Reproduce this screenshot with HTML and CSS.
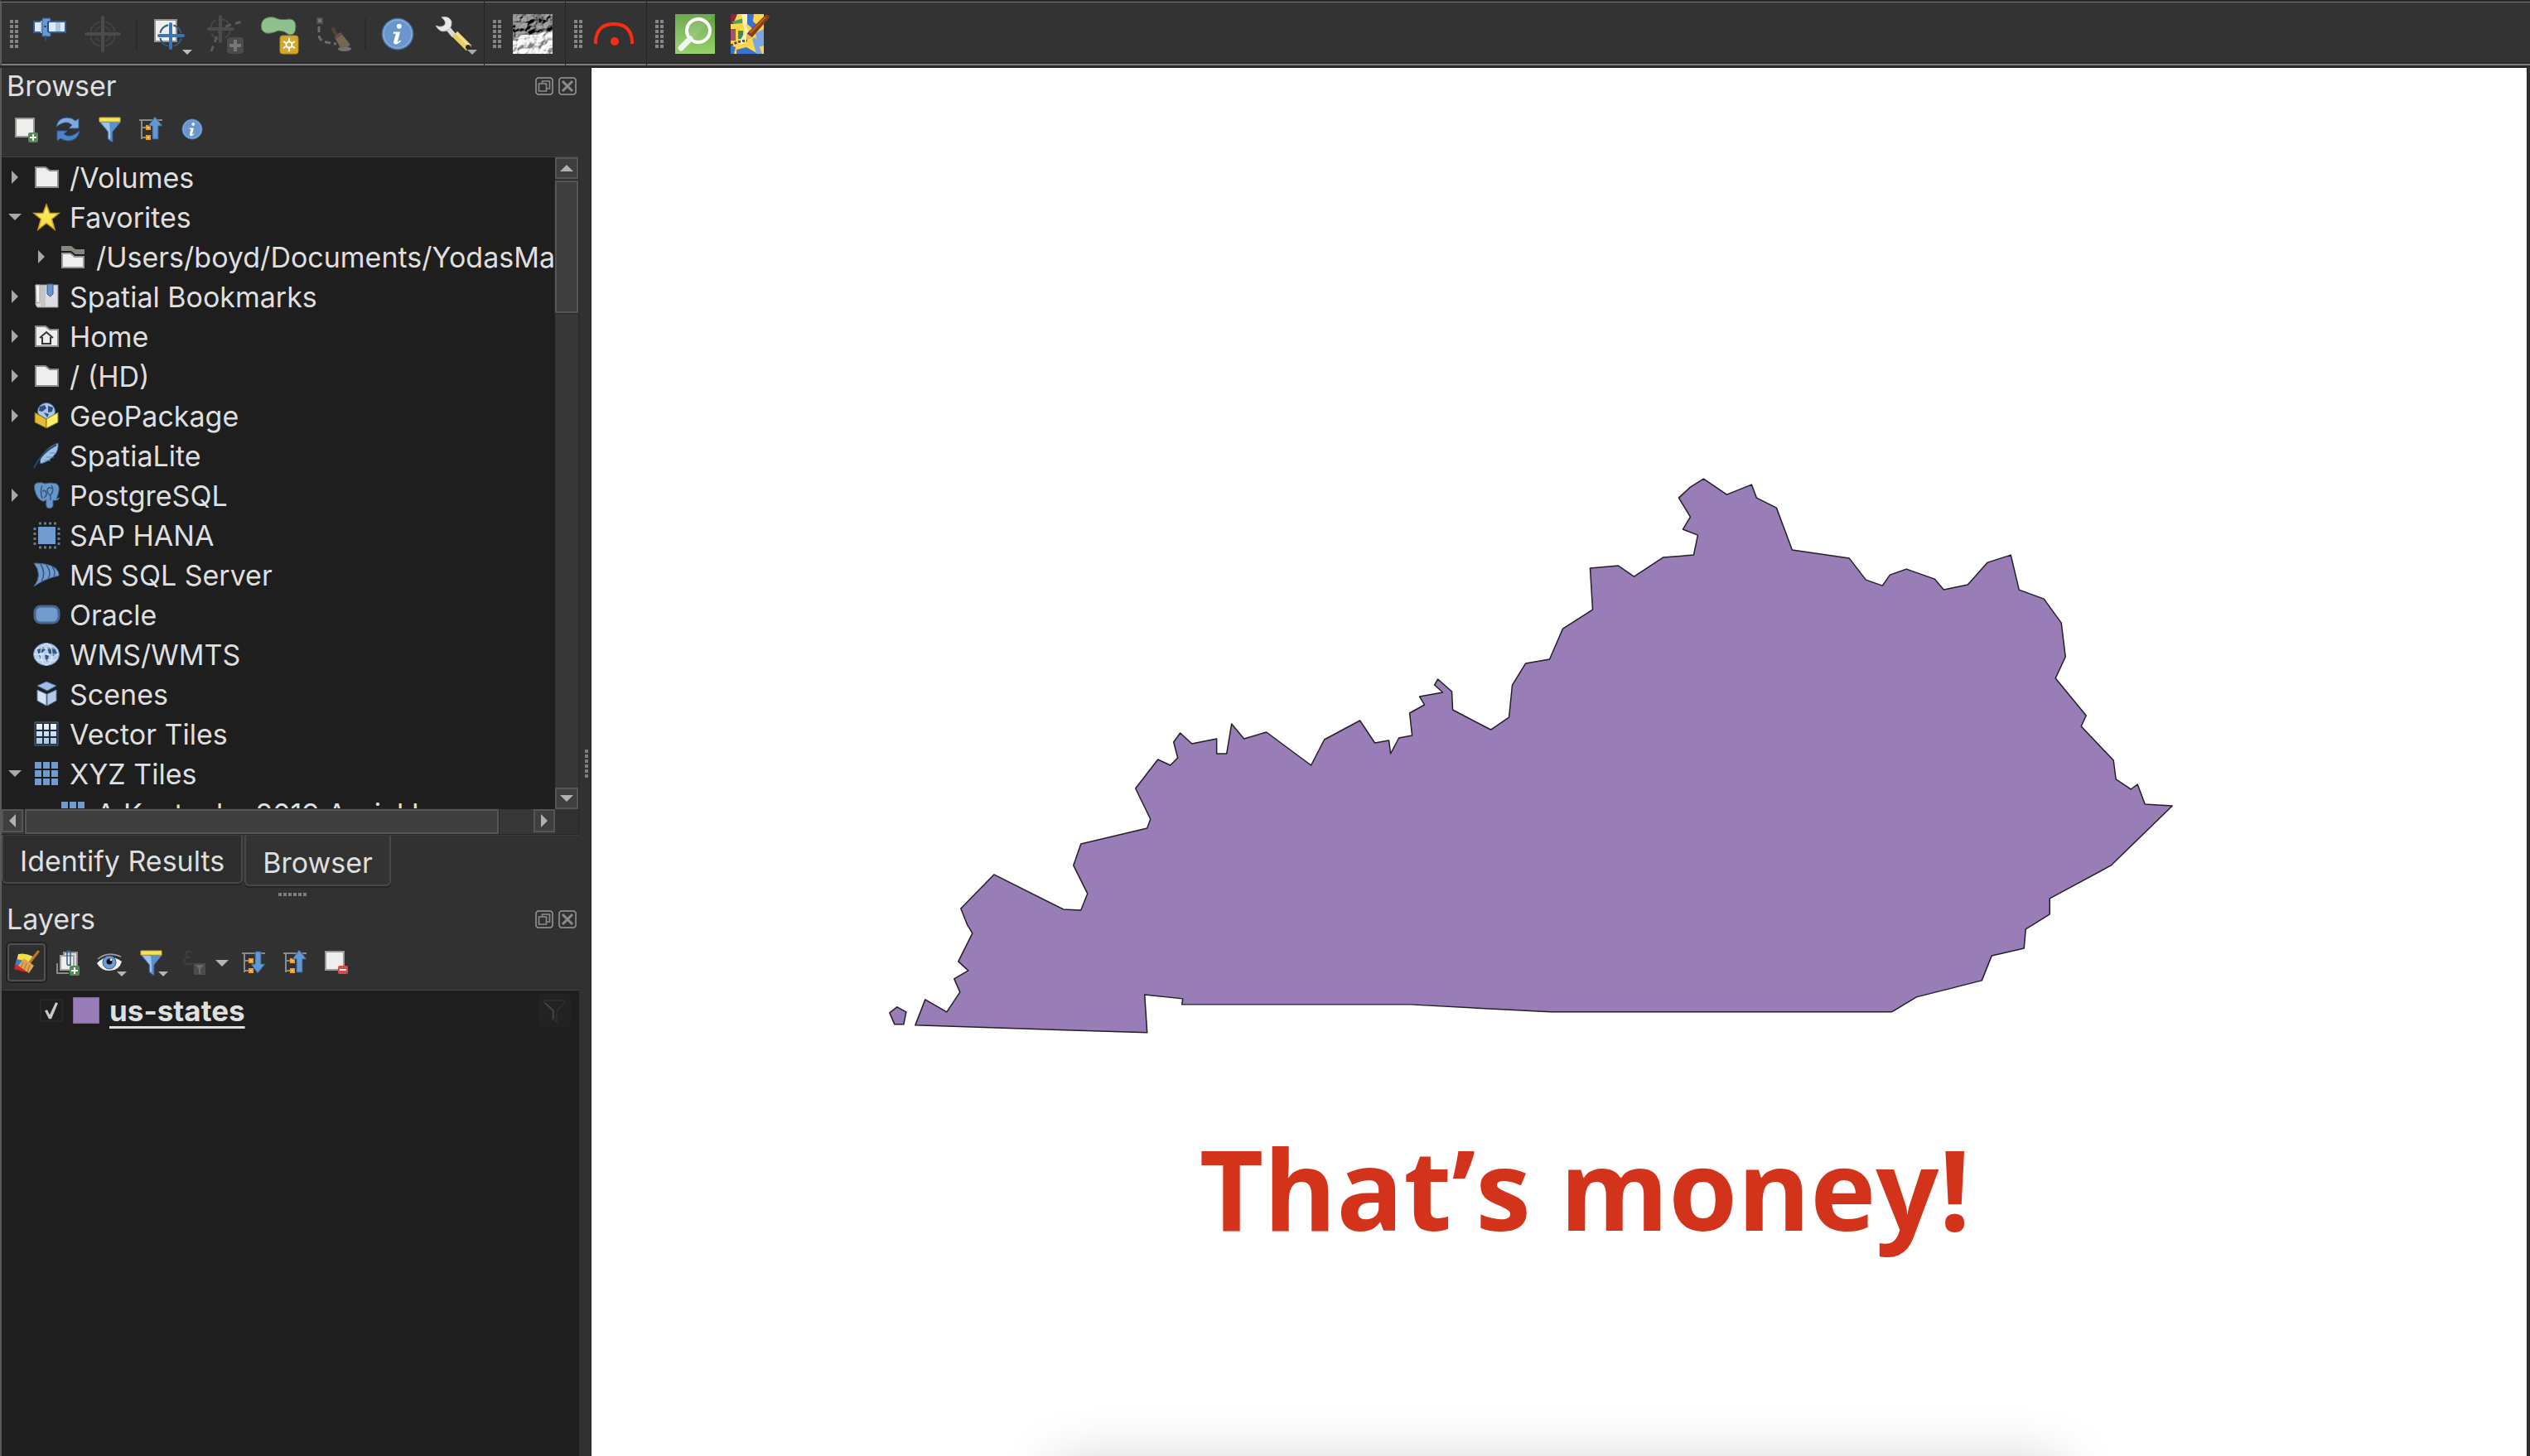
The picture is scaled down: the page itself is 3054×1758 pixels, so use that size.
FILE: index.html
```html
<!DOCTYPE html>
<html lang="en">
<head>
<meta charset="utf-8">
<title>Map</title>
<link rel="stylesheet" href="styles.css">
</head>
<body>
<svg class="defs" aria-hidden="true">
  <defs>
    <linearGradient id="gold" x1="0" y1="0" x2="0" y2="1"><stop offset="0" stop-color="#fff46b"/><stop offset="1" stop-color="#f0d840"/></linearGradient>
    <linearGradient id="ice" x1="0" y1="0" x2="0" y2="1"><stop offset="0" stop-color="#f4f6fa"/><stop offset="1" stop-color="#a4c3e6"/></linearGradient>
    <linearGradient id="leaf" x1="0" y1="0" x2="0" y2="1"><stop offset="0" stop-color="#5e9f3a"/><stop offset="1" stop-color="#97d36b"/></linearGradient>
    <filter id="relief" x="0" y="0" width="1" height="1">
      <feTurbulence type="fractalNoise" baseFrequency="0.09 0.1" numOctaves="3" seed="5"/>
      <feDiffuseLighting lighting-color="#fff" surfaceScale="9" diffuseConstant="1"><feDistantLight azimuth="225" elevation="42"/></feDiffuseLighting>
    </filter>
  </defs>
  <symbol id="folder" viewBox="0 0 32 32"><path d="M3 4h12l5 4h10v20H3z" fill="#eee" stroke="#8b8b88" stroke-width="2"/></symbol>
  <symbol id="folder-open" viewBox="0 0 32 32"><path d="M2 3h12l5 4h11v6H19l-5-4H2z" fill="#85877f"/><path d="M3 12h10l5 4h11v13H3z" fill="#eee" stroke="#999" stroke-width="2"/></symbol>
  <symbol id="info" viewBox="0 0 32 32"><circle cx="16" cy="16" r="15" fill="#6a96cb" stroke="#44709f" stroke-width="1"/><circle cx="16" cy="16" r="13.5" fill="none" stroke="#8db2dc" stroke-width="1"/><circle cx="17.5" cy="8.5" r="2.3" fill="#fff"/><path d="M12 14h6.500l-2.600 9.500q.8.500 2.500-1.500l.8.800q-3 3.800-5.700 3.200-2-.6-1.200-3.300l2-7h-2.500z" fill="#fff"/></symbol>
  <symbol id="filter" viewBox="0 0 32 32"><path d="M4 7h26L20 19v13l-6-4v-9z" fill="#5c8fcb" stroke="#2f5680"/><path d="M6 8h10l1 11v9l-2-1v-8z" fill="#9fc2e8"/><path d="M4 2h25v5H4z" fill="#f6e35b" stroke="#c9b545"/></symbol>
  <symbol id="tree-up" viewBox="0 0 32 32"><path d="M2 5h28M5 5v23M5 14h6M5 26h6" fill="none" stroke="#8a8a86" stroke-width="2"/><path d="M10 11h6v6h-6zM10 23h6v6h-6z" fill="#f39b22"/><path d="M12 13h2v2h-2zM12 25h2v2h-2z" fill="#ffd27a"/><path d="M21 1l9 11h-5v16h-7V12h-5z" fill="#6496cf" stroke="#2f5c8f"/></symbol>
  <symbol id="tree-down" viewBox="0 0 32 32"><path d="M2 5h28M5 5v23M5 14h6M5 26h6" fill="none" stroke="#8a8a86" stroke-width="2"/><path d="M10 11h6v6h-6zM10 23h6v6h-6z" fill="#f39b22"/><path d="M12 13h2v2h-2zM12 25h2v2h-2z" fill="#ffd27a"/><path d="M21 29l9-11h-5V3h-7v15h-5z" fill="#6496cf" stroke="#2f5c8f"/></symbol>
  <symbol id="float" viewBox="0 0 22 22"><path d="M3 1h16l2 2v16l-2 2H3l-2-2V3z" fill="none" stroke="#999" stroke-width="1.500"/><path d="M8.500 8V5h9v9h-4M4.500 8h9v9h-9z" fill="none" stroke="#8c8c8c" stroke-width="1.600"/></symbol>
  <symbol id="close" viewBox="0 0 22 22"><path d="M3 1h16l2 2v16l-2 2H3l-2-2V3z" fill="none" stroke="#999" stroke-width="1.500"/><path d="M5 5l12 12M17 5L5 17" stroke="#8c8c8c" stroke-width="3"/></symbol>
</svg>

<header class="toolbar" role="toolbar" aria-label="Tools">
  <div class="group">
    <span class="grip"></span>
    <button class="tool" aria-label="Satellite"><svg viewBox="0 0 48 48"><path d="M5 9h38v13H5z" fill="#dfe9f5" stroke="#2f5f94" stroke-width="2"/><path d="M13 8h3v15h-3zM31 10h6v11h-6z" fill="#a6c6ec"/><path d="M15 5h10v4h-3v13h3v5H15z" fill="#6b9ad2" stroke="#2d5b90"/><path d="M22 9v13M17 15h3M19 26v6" stroke="#24507f" stroke-width="2"/></svg></button>
    <button class="tool" aria-label="Recenter" disabled><svg viewBox="0 0 48 48" fill="none"><circle cx="22" cy="24" r="15" stroke="#444" stroke-width="2" stroke-dasharray="17 6.560" stroke-dashoffset="-3"/><circle cx="22" cy="24" r="9" stroke="#3f3f3f" stroke-width="2" stroke-dasharray="9 5.140" stroke-dashoffset="-2"/><path d="M22 4v40M2 24h40" stroke="#4a4b4f" stroke-width="4" stroke-linecap="round"/></svg></button>
    <span class="sep"></span>
    <button class="tool" aria-label="Position"><svg viewBox="0 0 48 48" fill="none"><path d="M7 7h26v26H7z" fill="#eeeeec" stroke="#93938f" stroke-width="2"/><circle cx="26" cy="26" r="13" stroke="#33597f" stroke-width="2" stroke-dasharray="14 6.420" stroke-dashoffset="-3"/><path d="M26 12v29M12 26h29" stroke="#3f73ae" stroke-width="4" stroke-linecap="round"/><path d="M40 43h12l-6 6z" fill="#bbb"/></svg></button>
    <button class="tool" aria-label="Add vertex" disabled><svg viewBox="0 0 48 48" fill="none"><circle cx="20" cy="18" r="12" stroke="#464646" stroke-width="2" stroke-dasharray="13 5.850"/><path d="M9 45l8-21 6-8 23-7" stroke="#5a5a5a" stroke-width="3" stroke-dasharray="7 5"/><path d="M20 3v30M6 18h29" stroke="#4a4b4f" stroke-width="4" stroke-linecap="round"/><rect x="28" y="28" width="20" height="20" rx="4" fill="#4a4c4a"/><path d="M38 31v14M31 38h14" stroke="#777" stroke-width="4"/></svg></button>
    <button class="tool" aria-label="Add polygon"><svg viewBox="0 0 48 48"><path d="M4 10Q8 2 19 4q7 4 18 2 8 0 8 9 0 11-8 10-6-5-13-5-9 4-15 3Q1 20 4 10z" fill="#8fc18e" stroke="#4e7a4f"/><rect x="26" y="26" width="22" height="22" rx="3" fill="#d2a92c" stroke="#b08a1e"/><path d="M37 29v16M30 33l14 8M44 33l-14 8" stroke="#fff" stroke-width="2"/><circle cx="37" cy="37" r="3.500" fill="#d2a92c" stroke="#fff" stroke-width="2"/></svg></button>
    <button class="tool" aria-label="Reset track" disabled><svg viewBox="0 0 48 48"><path d="M5 5h6v6H5z" fill="#777" stroke="#4f4f4f" stroke-width="2"/><path d="M7 15v10q0 7 9 9l12 2" fill="none" stroke="#6d6d6d" stroke-width="3" stroke-dasharray="7 4"/><ellipse cx="38" cy="42" rx="8" ry="3" fill="#737373"/><path d="M24 18l8 14" stroke="#5b4234" stroke-width="4" stroke-linecap="round"/><path d="M26 28l7-6 12 15q-4 4-12 4z" fill="#746852"/><path d="M27 29l7-5" stroke="#5a4a45" stroke-width="2"/></svg></button>
    <span class="sep"></span>
    <button class="tool" aria-label="Identify"><svg viewBox="0 0 48 48"><use href="#info" x="4" y="4" width="40" height="40"/></svg></button>
    <button class="tool" aria-label="Options"><svg viewBox="0 0 48 48"><path d="M16 14l10 12" stroke="#d8dad7" stroke-width="6"/><path d="M11 4q9-2 12 5 1 6-4 10-7 4-12-1l-3-4q7 3 11-1 2-5-4-9z" fill="#e9e9e7" stroke="#c2c2be"/><path d="M27 24l17 17" stroke="#e9cf68" stroke-width="9"/><path d="M29 23l17 17" stroke="#f6e7a0" stroke-width="2"/><circle cx="43" cy="40" r="3" fill="#2a2a2a"/><path d="M42 43h12l-6 6z" fill="#aaa"/></svg></button>
  </div>
  <div class="group">
    <span class="grip"></span>
    <button class="tool" aria-label="Hillshade"><svg viewBox="0 0 48 48"><rect width="48" height="48" filter="url(#relief)"/><path d="M0 27l14-3 16 1 8-5 10 1v27H0z" fill="#fff" opacity=".5"/><path d="M0 0h48v20l-10 1-8 4H14L0 27z" fill="#000" opacity=".35"/></svg></button>
  </div>
  <div class="group">
    <span class="grip"></span>
    <button class="tool" aria-label="Snapping arc"><svg viewBox="0 0 48 48"><path d="M2 36v-4Q4 12 24 12t22 20v4" fill="none" stroke="#fb2c16" stroke-width="4"/><circle cx="25" cy="33" r="5" fill="#fb2c16"/></svg></button>
  </div>
  <div class="group">
    <span class="grip"></span>
    <button class="tool" aria-label="Search"><svg viewBox="0 0 48 48"><path d="M0 0h48v48H0z" fill="url(#leaf)"/><path d="M0 0h48L20 32l-20 8z" fill="#fff" opacity=".1"/><circle cx="28" cy="20" r="14" fill="#fff" fill-opacity=".12" stroke="#fff" stroke-width="4"/><path d="M18 30L7 41" stroke="#f1f7ee" stroke-width="7" stroke-linecap="round"/></svg></button>
    <button class="tool" aria-label="Edit map"><svg viewBox="0 0 48 48"><path d="M1 0h40v48H1z" fill="#ffd54a"/><path d="M1 0h8L4 12H1z" fill="#8d2440"/><path d="M1 18h6v14H1z" fill="#a3506e"/><path d="M3 9l13-4-1 6-11 1z" fill="#41a94d"/><path d="M10 20h6v10h-6z" fill="#3b8a55"/><path d="M14 0h8l-2 14 4 10-8 12h-6l8-14z" fill="#fff0b8"/><path d="M21 0h8l-1 9 6 5-5 5-8-7zM8 43l12-3 14 8H8zM1 38l6 2-2 8H1z" fill="#3a72cf"/><path d="M31 23l10-5v20l-7 2zM27 30l4-2 8 20h-7z" fill="#7ba6e5"/><path d="M1 38q10-6 20-6" fill="none" stroke="#4f4f44" stroke-width="3" stroke-dasharray="3 2"/><path d="M21 23L43 1q4-1 5 3L27 28l-7 3z" fill="#8a3f12"/><path d="M24 23L43 4" stroke="#b5632b" stroke-width="2"/><path d="M21 24l6 4-7 3z" fill="#e8b87c"/></svg></button>
  </div>
</header>

<main class="workspace">
  <aside class="dock">
    <div class="titlebar">
      <h2 class="title">Browser</h2>
      <button class="mini" aria-label="Float Browser"><svg><use href="#float"/></svg></button>
      <button class="mini" aria-label="Close Browser"><svg><use href="#close"/></svg></button>
    </div>
    <div class="panelbar">
      <button class="small" aria-label="Add layer"><svg viewBox="0 0 32 32"><path d="M3 3h22v22H3z" fill="#eeeeec" stroke="#999994" stroke-width="2"/><rect x="18" y="20" width="12" height="12" rx="2" fill="#548a55"/><path d="M24 22v8M20 26h8" stroke="#fff" stroke-width="2"/></svg></button>
      <button class="small" aria-label="Refresh"><svg viewBox="0 0 32 32"><path d="M2 13Q4 2 15 2q6 0 10 4l4-3v12H17l4-4q-4-4-9-3-5 1-10 5z" fill="#7faade" stroke="#2f5f9e"/><path d="M30 18q-2 11-13 12-6 0-10-3l-4 3V18h12l-4 4q4 3 9 2 6-2 10-6z" fill="#4e84c6" stroke="#2f5f9e"/></svg></button>
      <button class="small" aria-label="Filter browser"><svg><use href="#filter"/></svg></button>
      <button class="small" aria-label="Collapse all"><svg><use href="#tree-up"/></svg></button>
      <button class="small" aria-label="Properties"><svg viewBox="0 0 32 32"><use href="#info" x="3" y="3" width="26" height="26"/></svg></button>
    </div>
    <div class="browser">
      <ul class="tree">
        <li class="row"><button class="twist" aria-label="Expand"></button><svg><use href="#folder"/></svg><span>/Volumes</span></li>
        <li class="row"><button class="twist open" aria-label="Collapse"></button><svg viewBox="0 0 32 32"><path d="M16 1l4 10.500h11l-8.500 7L26 31l-10-7.500L6 31l3.500-12.500L1 11.500h11z" fill="url(#gold)" stroke="#c99a1c" stroke-width="1.500"/></svg><span>Favorites</span></li>
        <li class="row child"><button class="twist" aria-label="Expand"></button><svg><use href="#folder-open"/></svg><span>/Users/boyd/Documents/YodasMa</span></li>
        <li class="row"><button class="twist" aria-label="Expand"></button><svg viewBox="0 0 32 32"><path d="M3 2h27v27H5l-2-3z" fill="#dcdde0" stroke="#8d9098"/><path d="M3 2h5v21l-4 1z" fill="#f5f5f5" stroke="#9a9a9a"/><path d="M9 3h6v25H9z" fill="#c3c5c9"/><path d="M17 1h7v12l-3.500 3-3.500-3z" fill="#6794c9" stroke="#355f92"/></svg><span>Spatial Bookmarks</span></li>
        <li class="row"><button class="twist" aria-label="Expand"></button><svg viewBox="0 0 32 32"><use href="#folder"/><path d="M8 18l8-7 8 7M11 17v8h10v-8" fill="none" stroke="#333" stroke-width="2"/></svg><span>Home</span></li>
        <li class="row"><button class="twist" aria-label="Expand"></button><svg><use href="#folder"/></svg><span>/ (HD)</span></li>
        <li class="row"><button class="twist" aria-label="Expand"></button><svg viewBox="0 0 32 32"><circle cx="16" cy="11" r="10.500" fill="#a9c6e8" stroke="#4475a8"/><path d="M8 5l6-2 2 4-5 4-4-1zM18 4l6 2-1 5-5 1zM13 12l6 2-2 4z" fill="#2a4f7c"/><path d="M2 12l14 8v11L2 24z" fill="#e3bc35" stroke="#6e5a10"/><path d="M30 12l-14 8v11l14-7z" fill="#fff06a" stroke="#8a7a20"/></svg><span>GeoPackage</span></li>
        <li class="row"><span class="twist none"></span><svg viewBox="0 0 32 32"><path d="M30 1q1 9-4 14-6 8-17 11Q7 20 13 13 20 4 30 1z" fill="#9fc0e4" stroke="#3c6591"/><path d="M28 3Q10 12 1 31" fill="none" stroke="#27496e" stroke-width="2"/><path d="M13 22h8M16 18h9M20 13h8" stroke="#5f8bbd"/></svg><span>SpatiaLite</span></li>
        <li class="row"><button class="twist" aria-label="Expand"></button><svg viewBox="0 0 32 32"><path d="M5 1q6-1 9 1 7-2 14 0 4 2 3 9-1 6-3 9l4-1q-2 4-8 3v7q-2 4-7 2-2-2-1-10-2 3-5 2-6-2-9-13Q0 2 5 1z" fill="#6996c9" stroke="#3b5f89"/><path d="M11 4q-3 7 0 16M22 4q4 6-1 12v6M13 19q5-3 2-8-3-2-3 1M22 8q-4-3-5 2 0 3 3 6" fill="none" stroke="#34557c" stroke-width="1.500"/></svg><span>PostgreSQL</span></li>
        <li class="row"><span class="twist none"></span><svg viewBox="0 0 32 32"><path d="M6 6h21v21H6z" fill="#6f9bce"/><path d="M7 2h21M7 31h21" stroke="#637a96" stroke-width="3" stroke-dasharray="3"/><path d="M2 7v21M31 7v21" stroke="#637a96" stroke-width="3" stroke-dasharray="3"/></svg><span>SAP HANA</span></li>
        <li class="row"><span class="twist none"></span><svg viewBox="0 0 32 32"><path d="M1 2q18 0 26 6 5 5 4 9-18 4-30 13 11-14 0-28z" fill="#6f9bce" stroke="#45698f"/><path d="M9 3q7 12 1 21M16 4q7 10 2 17M23 6q5 7 2 12" fill="none" stroke="#35577d" stroke-width="1.500"/></svg><span>MS SQL Server</span></li>
        <li class="row"><span class="twist none"></span><svg viewBox="0 0 32 32"><rect x="2" y="6" width="29" height="20" rx="7" fill="#6f9bce" stroke="#4a658a" stroke-width="3"/></svg><span>Oracle</span></li>
        <li class="row"><span class="twist none"></span><svg viewBox="0 0 32 32"><ellipse cx="16" cy="16" rx="15.500" ry="13.500" fill="#b7cfec" stroke="#6c93c2"/><path d="M5 10l7-3 3 3-4 4-5 1zM17 8l9 0 3 7-5 3-5-3zM14 16l5 2-2 7-2-2zM7 17l3 1-1 4z" fill="#34577f"/><path d="M1 16h30M4 9h24M4 23h24" stroke="#eaf2fb" opacity=".8"/><ellipse cx="16" cy="16" rx="7" ry="13" fill="none" stroke="#eaf2fb"/></svg><span>WMS/WMTS</span></li>
        <li class="row"><span class="twist none"></span><svg viewBox="0 0 32 32"><path d="M16 1l12 5-11 6L5 6z" fill="#9dbde2" stroke="#44709f"/><path d="M5 11l11 5v14L5 24z" fill="#d3e1f2" stroke="#5d7fa8"/><path d="M28 11l-11 5v14l11-6z" fill="#b3cbe8" stroke="#5d7fa8"/></svg><span>Scenes</span></li>
        <li class="row"><span class="twist none"></span><svg viewBox="0 0 32 32"><path d="M2 2h28v28H2z" fill="#1d2b3d" stroke="#5f6f84"/><path d="M4 4h7v7H4zM13 4h6v7h-6zM21 4h7v7h-7zM4 13h7v6H4zM13 13h6v6h-6zM21 13h7v6h-7zM4 21h7v7H4zM13 21h6v7h-6zM21 21h7v7h-7z" fill="url(#ice)"/></svg><span>Vector Tiles</span></li>
        <li class="row"><button class="twist open" aria-label="Collapse"></button><svg viewBox="0 0 32 32"><path d="M2 2h8v8H2zM12 2h8v8h-8zM22 2h8v8h-8zM2 12h8v8H2zM12 12h8v8h-8zM22 12h8v8h-8zM2 22h8v8H2zM12 22h8v8h-8zM22 22h8v8h-8z" fill="#6f9bce"/></svg><span>XYZ Tiles</span></li>
        <li class="row child"><span class="twist none"></span><svg viewBox="0 0 32 32"><path d="M2 2h8v8H2zM12 2h8v8h-8zM22 2h8v8h-8zM2 12h8v8H2zM12 12h8v8h-8zM22 12h8v8h-8z" fill="#6f9bce"/></svg><span>A Kentucky 2019 Aerial Image</span></li>
      </ul>
      <div class="vscroll">
        <button class="arrow up" aria-label="Scroll up"></button>
        <div class="vthumb"></div>
        <button class="arrow down" aria-label="Scroll down"></button>
      </div>
      <div class="hscroll">
        <button class="arrow left" aria-label="Scroll left"></button>
        <div class="hthumb"></div>
        <button class="arrow right" aria-label="Scroll right"></button>
      </div>
    </div>
    <nav class="tabs">
      <button class="tab">Identify Results</button>
      <button class="tab active">Browser</button>
    </nav>
    <div class="splitter"><span class="dots"></span></div>
    <div class="titlebar">
      <h2 class="title">Layers</h2>
      <button class="mini" aria-label="Float Layers"><svg><use href="#float"/></svg></button>
      <button class="mini" aria-label="Close Layers"><svg><use href="#close"/></svg></button>
    </div>
    <div class="panelbar">
      <button class="small pressed" aria-label="Layer styling"><svg viewBox="0 0 32 32"><path d="M6 6q9-2 18 3l-6 14-15-4z" fill="#f1df4d"/><path d="M4 12l14 3-4 8-12-3z" fill="#4a7db8"/><path d="M2 19l14 2 3 7q-9-1-18-4z" fill="#d8242b"/><path d="M30 3L20 16" stroke="#b67b28" stroke-width="3" stroke-linecap="round"/><path d="M13 11l12 9-6 9-13-9z" fill="#dca556"/><path d="M12 16l-3 7M16 17l-3 8M20 19l-3 9" stroke="#a8702b"/></svg></button>
      <button class="small" aria-label="Add group"><svg viewBox="0 0 32 32" fill="none"><path d="M3 17v12h14" stroke="#8c8c88" stroke-width="2"/><path d="M11 4h16v17H11z" fill="#ddd" stroke="#8f8f8b" stroke-width="2"/><path d="M7 8h16v17H7z" fill="#eee" stroke="#a5a5a0" stroke-width="2"/><path d="M19 20V3q-2-3-4 0v15q2 3 4 0" stroke="#315f93" stroke-width="1.500"/><rect x="18" y="20" width="12" height="12" rx="2" fill="#548a55"/><path d="M24 22v8M20 26h8" stroke="#fff" stroke-width="2"/></svg></button>
      <button class="small" aria-label="Map themes"><svg viewBox="0 0 32 32"><path d="M1 17Q14 3 31 15q-3 11-15 11Q6 26 1 17z" fill="#f0f0f0"/><path d="M2 12Q14 2 30 9" fill="none" stroke="#a0a09c" stroke-width="1.500"/><circle cx="16" cy="16" r="8" fill="#6d9bd2" stroke="#365f8f"/><circle cx="16" cy="15" r="3.500" fill="#111"/><circle cx="18" cy="13" r="1.300" fill="#fff"/><path d="M25 27h12l-6 6z" fill="#b5b5b5"/></svg></button>
      <button class="small" aria-label="Filter legend"><svg viewBox="0 0 32 32"><use href="#filter"/><path d="M25 27h12l-6 6z" fill="#b5b5b5"/></svg></button>
      <button class="small wide" aria-label="Filter by expression" disabled><svg viewBox="0 0 32 32"><path d="M17 4Q9 0 8 6q0 4 6 4-8 0-8 5 2 6 11 2" fill="none" stroke="#3f3f3f" stroke-width="2"/><path d="M18 17h14v14H18z" fill="#4b4b4b"/><path d="M20 19h10l-4 5v7l-2-2v-5z" fill="#6a6a6a"/></svg><svg viewBox="0 0 16 32"><path d="M0 13h16l-8 8z" fill="#b5b5b5"/></svg></button>
      <button class="small" aria-label="Expand all"><svg><use href="#tree-down"/></svg></button>
      <button class="small" aria-label="Collapse all layers"><svg><use href="#tree-up"/></svg></button>
      <button class="small" aria-label="Remove layer"><svg viewBox="0 0 32 32"><path d="M3 3h22v22H3z" fill="#eeeeec" stroke="#999994" stroke-width="2"/><rect x="18" y="20" width="12" height="10" rx="2" fill="#de4a4a"/><path d="M20 25h8" stroke="#fff" stroke-width="2"/></svg></button>
    </div>
    <ul class="layers">
      <li class="layer">
        <input class="check" type="checkbox" id="layer-states" checked>
        <span class="swatch"></span>
        <label class="name" for="layer-states">us-states</label>
        <button class="badge" aria-label="Layer filter"><svg viewBox="0 0 32 32"><path d="M4 4h24v3L19 17v13l-5-4v-9L4 7z" fill="none" stroke="#303030" stroke-width="1.500"/><path d="M5 7l10 9v10" fill="none" stroke="#4a4a4a" stroke-width="1.500"/></svg></button>
      </li>
    </ul>
  </aside>
  <div class="gutter"><span class="dots upright"></span></div>
  <section class="canvas">
    <svg class="map" viewBox="714 82 2337 1676" role="img" aria-label="Kentucky">
      <g class="state">
        <path d="M1074 1223L1083 1216L1094 1222L1091 1237L1080 1237Z"/>
        <path d="M1105 1238L1117 1207L1143 1222L1159 1198L1152 1182L1169 1172L1157 1161L1174 1127L1168 1117L1160 1097L1200 1056L1284 1098L1305 1099L1313 1079L1296 1045L1305 1019L1385 1000L1389 989L1371 952L1398 917L1413 924L1422 915L1417 896L1425 885L1439 898L1469 892L1469 910L1481 910L1487 874L1502 892L1529 884L1583 924L1599 893L1642 870L1660 897L1677 894L1679 910L1689 891L1705 888L1702 861L1720 851L1714 841L1742 836L1732 827L1736 820L1753 835L1754 857L1800 881L1822 866L1826 827L1842 801L1871 796L1887 759L1923 736L1920 686L1954 683L1973 696L2008 673L2045 670L2050 646L2032 639L2041 624L2027 601L2041 588L2057 578L2085 597L2115 585L2121 601L2145 613L2164 664L2233 674L2253 700L2273 707L2282 694L2302 687L2336 699L2347 712L2376 706L2400 679L2428 670L2438 712L2468 723L2489 752L2494 793L2482 819L2519 864L2513 877L2552 918L2555 941L2573 953L2581 947L2590 971L2623 973L2549 1045L2475 1085L2475 1104L2446 1122L2444 1145L2405 1154L2393 1184L2314 1204L2284 1222L1872 1222L1703 1213L1427 1213L1428 1206L1382 1201L1385 1247Z"/>
      </g>
      <text class="caption" x="1448" y="1486">That’s money!</text>
    </svg>
    <div class="shade"></div>
  </section>
</main>
</body>
</html>
```

FILE: styles.css
```css
* { box-sizing: border-box; }

body {
  margin: 0;
  height: 100vh;
  display: flex;
  flex-direction: column;
  overflow: hidden;
  background: #313131;
  color: #dfdfdf;
  font: 34px/44px Inter, "Liberation Sans", sans-serif;
}

button {
  padding: 0;
  border: 0;
  background: none;
  color: inherit;
  font: inherit;
}

ul { margin: 0; padding: 0; list-style: none; }
svg { display: block; overflow: visible; }
.defs { position: absolute; width: 0; height: 0; }

/* Top toolbar */
.toolbar {
  flex: none;
  display: flex;
  height: 79px;
  border-top: 2px solid #272727;
  border-left: 2px solid #5a5a5a;
  background: #333;
  box-shadow: inset 0 1px #7a7a7a, inset 0 -2px #7d7d7d, inset 0 -4px #282828;
}

.group {
  display: flex;
  align-items: center;
  gap: 18px;
  padding: 0 14px 0 10px;
}
.group + .group { padding-right: 15px; border-left: 1px solid #262626; }

.grip {
  width: 10px;
  height: 34px;
  margin-right: -4px;
  background: linear-gradient(#333 0 0) 4px 0 / 2px 100% no-repeat,
    repeating-linear-gradient(#858585 0 4px, #333 4px 6px);
}

.tool { width: 48px; height: 48px; }
.tool svg { width: 48px; height: 48px; }
.sep { width: 2px; height: 38px; margin: 0 -4px; background: #2b2b2b; }

/* Layout below the toolbar */
.workspace {
  flex: 1;
  min-height: 0;
  display: flex;
  border-top: 3px solid #292929;
}

.dock {
  flex: none;
  width: 699px;
  display: flex;
  flex-direction: column;
  border-left: 2px solid #5a5a5a;
}

.titlebar {
  display: flex;
  align-items: center;
  gap: 6px;
  height: 44px;
  padding: 0 3px 0 6px;
}
.title { flex: 1; margin: 0; font-size: 34px; font-weight: 400; }
.mini, .mini svg { width: 22px; height: 22px; }

.panelbar {
  display: flex;
  align-items: center;
  gap: 18px;
  height: 63px;
  padding: 0 14px 3px;
}
.small { display: flex; flex: none; }
.small svg { width: 32px; height: 32px; }
.wide { gap: 12px; margin-right: -4px; }
.wide svg + svg { width: 16px; }
.pressed {
  margin: 0 -7px;
  padding: 5px;
  border: 2px solid #505050;
  border-radius: 4px;
  background: #2f2f2f;
  box-shadow: 0 0 0 2px #222;
}

/* Browser tree */
.browser {
  flex: 819 1 0;
  min-height: 0;
  display: grid;
  grid-template: minmax(0, 1fr) 30px / minmax(0, 1fr) 28px;
  border-top: 1px solid #404040;
  border-right: 1px solid #272727;
  border-bottom: 1px solid #272727;
}

.tree { overflow: hidden; background: #1e1e1e; }
.row {
  display: flex;
  align-items: center;
  height: 48px;
  padding-left: 4px;
  white-space: nowrap;
}
.row svg { flex: none; width: 32px; height: 32px; margin: 0 12px 0 10px; }
.row span:last-child { padding-top: 2px; }
.child { padding-left: 36px; }

.twist { flex: none; width: 24px; height: 24px; display: grid; place-items: center; }
.twist::before {
  content: "";
  border: 8px solid transparent;
  border-left-color: #a8a8a8;
  border-right-width: 0;
}
.twist.open::before {
  border: 8px solid transparent;
  border-top-color: #a8a8a8;
  border-bottom-width: 0;
}
.twist.none { visibility: hidden; }

.vscroll, .hscroll { display: flex; gap: 2px; background: #373737; }
.vscroll { flex-direction: column; }
.vthumb, .hthumb, .arrow { border: 2px solid #555; background: #3f3f3f; }
.vthumb { height: 160px; outline: 1px solid #282828; }
.hthumb { width: 572px; outline: 1px solid #282828; }
.arrow { display: grid; place-items: center; width: 28px; height: 26px; }
.hscroll .arrow { width: 26px; height: 28px; }
.down { margin-top: auto; }
.right { margin-left: auto; }
.arrow::before { content: ""; border: 8px solid transparent; }
.up::before { border-bottom-color: #b0b0b0; border-top-width: 0; }
.down::before { border-top-color: #b0b0b0; border-bottom-width: 0; }
.left::before { border-right-color: #b0b0b0; border-left-width: 0; }
.right::before { border-left-color: #b0b0b0; border-right-width: 0; }

/* Dock tabs */
.tabs {
  display: flex;
  align-items: flex-start;
  gap: 2px;
  height: 62px;
  border-top: 1px solid #3c3c3c;
}
.tab {
  height: 58px;
  padding: 6px 20px 0;
  border: 2px solid #484848;
  border-top: 0;
  border-radius: 0 0 6px 6px;
  background: #2d2d2d;
  box-shadow: 0 2px #252525;
}
.active { height: 61px; background: #333; }

.splitter { display: grid; place-items: center; height: 18px; padding: 2px 0 0 4px; }
.dots {
  width: 34px;
  height: 4px;
  background: repeating-linear-gradient(90deg, #7d7d7d 0 4px, #333 4px 6px);
}
.upright {
  width: 4px;
  height: 34px;
  background: repeating-linear-gradient(#7d7d7d 0 4px, #333 4px 6px);
}

/* Layer list */
.layers {
  flex: 563 1 0;
  border-top: 1px solid #404040;
  background: #1e1e1e;
}
.layer { display: flex; align-items: center; height: 48px; padding: 0 10px 0 46px; }
.check {
  appearance: none;
  width: 28px;
  height: 28px;
  margin: 0 12px 0 0;
  border: 2px solid #272727;
}
.check:checked::after {
  content: "";
  display: block;
  width: 24px;
  height: 24px;
  background: #c8c8c8;
  clip-path: polygon(4px 12px, 7px 11px, 10px 17px, 17px 2px, 20px 3px, 12px 22px, 9px 22px);
}
.swatch { width: 32px; height: 32px; background: #997db6; border: 1px solid #7f6899; }
.name {
  margin-left: 12px;
  margin-right: auto;
  font-size: 35px;
  font-weight: 700;
  text-decoration: underline;
  text-decoration-thickness: 3px;
  text-underline-offset: 6px;
}
.badge { padding: 4px; border-radius: 4px; background: #222; }
.badge svg { width: 32px; height: 32px; }

.gutter {
  flex: none;
  width: 15px;
  display: grid;
  place-items: center;
  padding: 4px 0 0 4px;
  border-right: 1px solid #272727;
}

/* Map canvas */
.canvas {
  position: relative;
  flex: 1;
  min-width: 0;
  overflow: hidden;
  background: #fff;
  border-right: 1px solid #222;
  margin-right: 3px;
}
.map { width: 100%; height: 100%; }
.state { fill: #997db6; stroke: #231f28; stroke-width: 1.500px; stroke-linejoin: round; }
.caption { fill: #d2331a; font: 700 134px "Open Sans", Lato, sans-serif; }
.shade {
  position: absolute;
  top: 100%;
  left: 24%;
  right: 24%;
  height: 80px;
  margin-top: 12px;
  box-shadow: 0 0 70px rgba(0, 0, 0, .22);
}
```
